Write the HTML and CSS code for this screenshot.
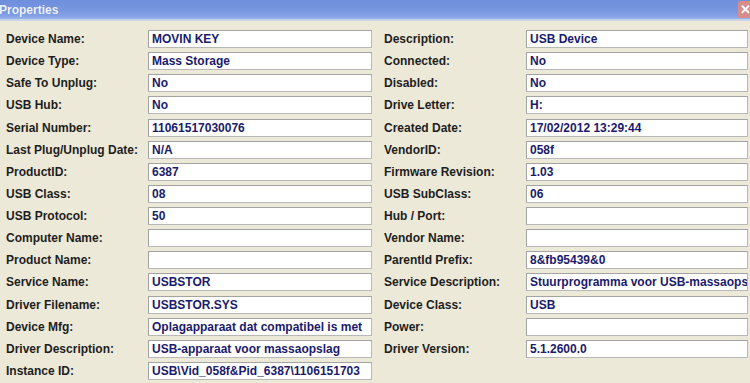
FILE: index.html
```html
<!DOCTYPE html>
<html>
<head>
<meta charset="utf-8">
<link rel="stylesheet" href="styles.css">
</head>
<body>
<div class="window">
  <div class="titlebar">
    <span class="title">Properties</span>
    <span class="close">✕</span>
  </div>
  <div class="content">
    <div class="grid">
      <div class="lbl">Device Name:</div><div class="box">MOVIN KEY</div><div></div><div class="lbl">Description:</div><div class="box">USB Device</div>
      <div class="lbl">Device Type:</div><div class="box">Mass Storage</div><div></div><div class="lbl">Connected:</div><div class="box">No</div>
      <div class="lbl">Safe To Unplug:</div><div class="box">No</div><div></div><div class="lbl">Disabled:</div><div class="box">No</div>
      <div class="lbl">USB Hub:</div><div class="box">No</div><div></div><div class="lbl">Drive Letter:</div><div class="box">H:</div>
      <div class="lbl">Serial Number:</div><div class="box">11061517030076</div><div></div><div class="lbl">Created Date:</div><div class="box">17/02/2012 13:29:44</div>
      <div class="lbl">Last Plug/Unplug Date:</div><div class="box">N/A</div><div></div><div class="lbl">VendorID:</div><div class="box">058f</div>
      <div class="lbl">ProductID:</div><div class="box">6387</div><div></div><div class="lbl">Firmware Revision:</div><div class="box">1.03</div>
      <div class="lbl">USB Class:</div><div class="box">08</div><div></div><div class="lbl">USB SubClass:</div><div class="box">06</div>
      <div class="lbl">USB Protocol:</div><div class="box">50</div><div></div><div class="lbl">Hub / Port:</div><div class="box"></div>
      <div class="lbl">Computer Name:</div><div class="box"></div><div></div><div class="lbl">Vendor Name:</div><div class="box"></div>
      <div class="lbl">Product Name:</div><div class="box"></div><div></div><div class="lbl">ParentId Prefix:</div><div class="box">8&amp;fb95439&amp;0</div>
      <div class="lbl">Service Name:</div><div class="box">USBSTOR</div><div></div><div class="lbl">Service Description:</div><div class="box">Stuurprogramma voor USB-massaops</div>
      <div class="lbl">Driver Filename:</div><div class="box">USBSTOR.SYS</div><div></div><div class="lbl">Device Class:</div><div class="box">USB</div>
      <div class="lbl">Device Mfg:</div><div class="box">Oplagapparaat dat compatibel is met</div><div></div><div class="lbl">Power:</div><div class="box"></div>
      <div class="lbl">Driver Description:</div><div class="box">USB-apparaat voor massaopslag</div><div></div><div class="lbl">Driver Version:</div><div class="box">5.1.2600.0</div>
      <div class="lbl">Instance ID:</div><div class="box">USB\Vid_058f&amp;Pid_6387\1106151703</div><div></div><div></div><div></div>
    </div>
  </div>
</div>
</body>
</html>
```

FILE: styles.css
```css
html, body {
  margin: 0;
  padding: 0;
  width: 750px;
  height: 383px;
  overflow: hidden;
  background: #ECE9D8;
}

.window {
  width: 750px;
  height: 383px;
  font-family: "Liberation Sans", Arial, sans-serif;
  font-weight: bold;
  font-size: 12px;
}

.titlebar {
  height: 19px;
  background: linear-gradient(to bottom, #6f8fdc 0%, #7896e0 55%, #86a2e6 85%, #9bb3ea 100%);
  display: flex;
  align-items: center;
  justify-content: space-between;
  border-bottom: 2px solid #c9d3e8;
}

.title {
  color: #eef2fb;
  font-size: 12px;
  margin-left: -1px;
  text-shadow: 0 0 1px #5f7fd0;
}

.close {
  width: 14px;
  height: 17px;
  margin-right: -2px;
  background: #d88c8c;
  color: #fff;
  font-size: 13px;
  display: flex;
  align-items: center;
  justify-content: center;
  border-radius: 2px 0 0 2px;
}

.content {
  padding: 7px 0 0 6px;
}

.grid {
  display: grid;
  grid-template-columns: 142px 224px 12px 142px 222px;
  grid-auto-rows: 22.13px;
  align-items: center;
}

.lbl {
  color: #1e1e1e;
  white-space: nowrap;
  line-height: 18px;
}

.box {
  height: 16px;
  line-height: 16px;
  background: #fff;
  border: 1px solid #a3a3a3;
  border-right-color: #b8b8b8;
  border-bottom-color: #b8b8b8;
  color: #1b1b6b;
  padding-left: 3px;
  white-space: nowrap;
  overflow: hidden;
}
```
